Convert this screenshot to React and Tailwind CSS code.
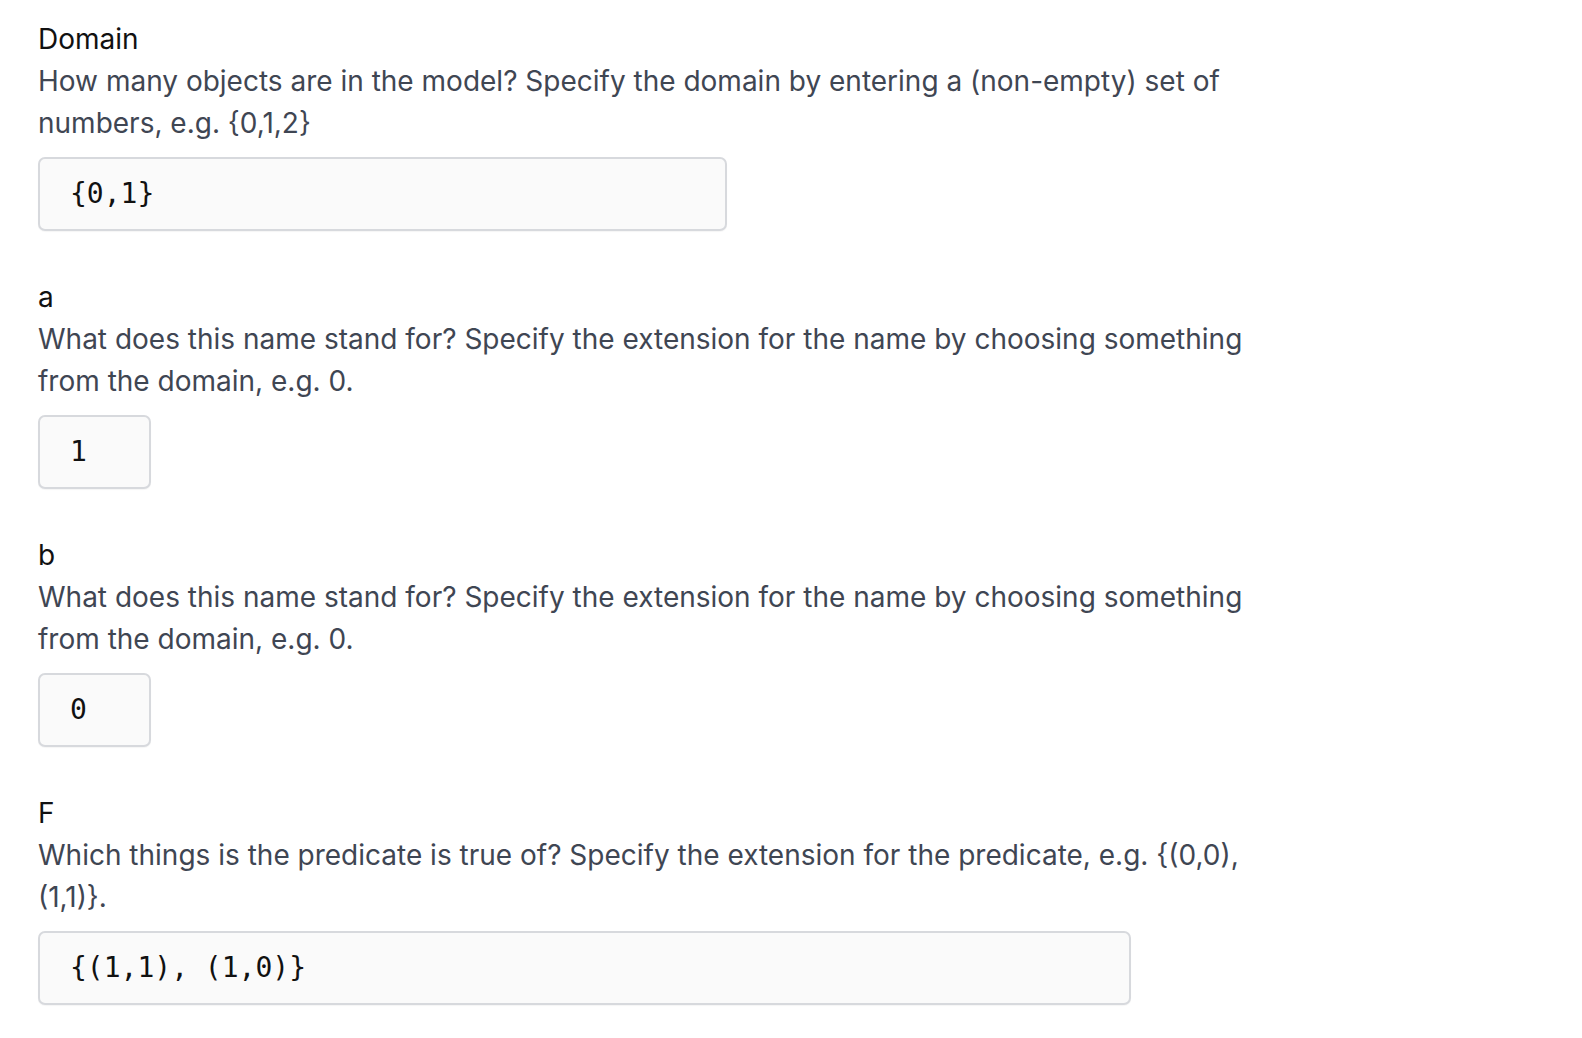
import React from "react";

const sections = [
  {
    name: "Domain",
    help: "How many objects are in the model? Specify the domain by entering a (non-empty) set of numbers, e.g. {0,1,2}",
    value: "{0,1}",
    width: "w-[689px]",
  },
  {
    name: "a",
    help: "What does this name stand for? Specify the extension for the name by choosing something from the domain, e.g. 0.",
    value: "1",
    width: "w-[113px]",
  },
  {
    name: "b",
    help: "What does this name stand for? Specify the extension for the name by choosing something from the domain, e.g. 0.",
    value: "0",
    width: "w-[113px]",
  },
  {
    name: "F",
    help: "Which things is the predicate is true of? Specify the extension for the predicate, e.g. {(0,0), (1,1)}.",
    value: "{(1,1), (1,0)}",
    width: "w-[1093px]",
  },
];

const Field = ({ name, help, value, width }) => (
  <div className="mb-[45px]">
    <p className="text-[28px] leading-[42px] text-[#111]">{name}</p>
    <p className="text-[28px] leading-[42px] text-[#3f4653] max-w-[1245px]">{help}</p>
    <div
      className={`${width} mt-[13px] h-[74px] flex items-center pl-[30px] bg-[#fafafa] border-2 border-[#d7d9dd] rounded-[7px] shadow-[0_1px_1px_rgba(0,0,0,0.04)]`}
    >
      <span className="text-[28px] text-[#111] font-['DejaVu_Sans_Mono',monospace]">{value}</span>
    </div>
  </div>
);

export default function App() {
  return (
    <div className="min-h-screen bg-white pl-[38px] pt-[18px] font-['Inter',sans-serif]">
      {sections.map((s) => (
        <Field key={s.name} {...s} />
      ))}
    </div>
  );
}
